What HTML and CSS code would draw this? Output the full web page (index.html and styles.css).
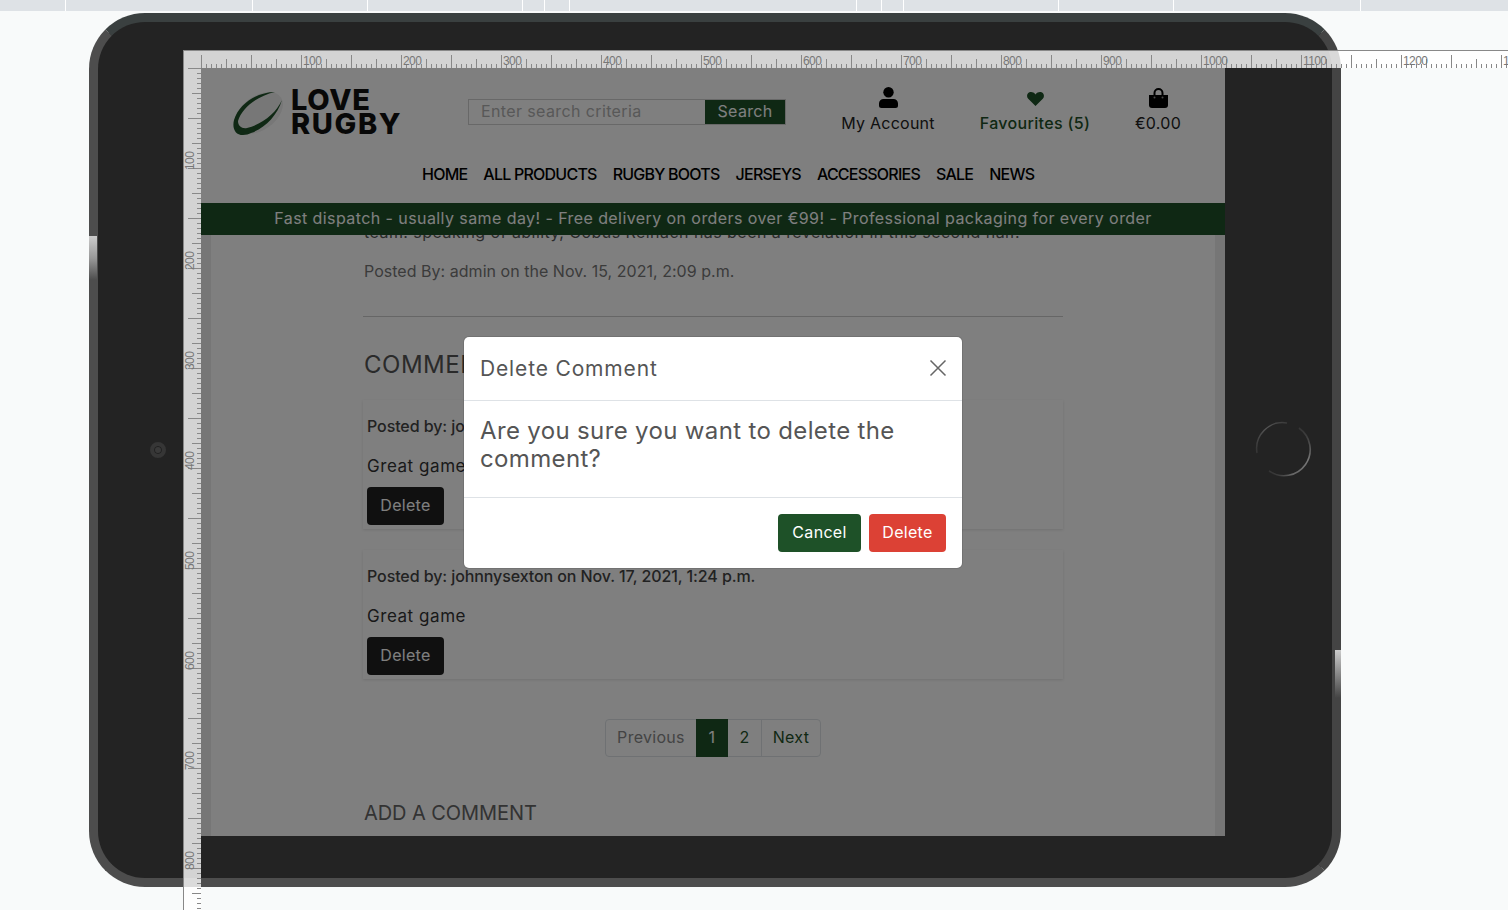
FILE: index.html
```html
<!DOCTYPE html>
<html lang="en">
<head>
    <meta charset="UTF-8">
    <title>Love Rugby - Responsive view</title>
    <link rel="stylesheet" href="styles.css">
</head>
<body>
    <div class="topbar">
        <span style="width:66px"></span><span style="width:187px"></span><span style="width:115px"></span>
        <span style="width:155px"></span><span style="width:22px"></span><span style="width:25px"></span>
        <span style="width:287px"></span><span style="width:25px"></span><span style="width:22px"></span>
        <span style="width:155px"></span><span style="width:115px"></span><span style="width:187px"></span>
    </div>

    <div class="tablet">
        <span class="side-btn side-left"></span>
        <span class="side-btn side-right"></span>
        <span class="camera"></span>
        <svg class="home-btn" width="60" height="60" viewBox="0 0 60 60">
            <defs>
                <linearGradient id="ringA" gradientUnits="userSpaceOnUse" x1="4" y1="36" x2="34" y2="4">
                    <stop offset="0" stop-color="#333"/>
                    <stop offset="0.6" stop-color="#555"/>
                    <stop offset="1" stop-color="#3a3a3a"/>
                </linearGradient>
                <linearGradient id="ringB" gradientUnits="userSpaceOnUse" x1="46" y1="8" x2="16" y2="54">
                    <stop offset="0" stop-color="#333"/>
                    <stop offset="0.4" stop-color="#777"/>
                    <stop offset="0.8" stop-color="#666"/>
                    <stop offset="1" stop-color="#2c2c2c"/>
                </linearGradient>
            </defs>
            <path d="M4 34A26 26 0 0 1 34 4" fill="none" stroke="url(#ringA)" stroke-width="1.5"/>
            <path d="M46 9A26 26 0 0 1 16 52" fill="none" stroke="url(#ringB)" stroke-width="1.6"/>
        </svg>

        <div class="screen">
            <header class="site-header">
                <div class="header-top">
                    <a class="logo">
                        <svg width="50" height="46" viewBox="0 0 50 46">
                            <ellipse cx="26" cy="23" rx="27" ry="17" transform="rotate(-36 26 23)" fill="#efefef"/>
                            <path d="M42 2C24 2 6 14 1 30C-1 38 2 45 10 45C13 45 16 44 18 43C32 38 44 26 49 10C43 23 30 34 14 38C9 39 5 36 5 31C9 18 24 6 42 2Z" fill="#1e5128"/>
                        </svg>
                        <span class="logo-text">LOVE<br><span class="logo-rugby">RUGBY</span></span>
                    </a>
                    <form class="search">
                        <span class="search-input">Enter search criteria</span>
                        <button type="button" class="search-btn">Search</button>
                    </form>
                    <a class="head-link account">
                        <svg width="19" height="21" viewBox="0 0 19 21">
                            <circle cx="9.5" cy="5.2" r="5.2"/>
                            <path d="M0 18.5V16.5A4.5 4.5 0 0 1 4.5 12H14.5A4.5 4.5 0 0 1 19 16.5V18.5A2.5 2.5 0 0 1 16.5 21H2.5A2.5 2.5 0 0 1 0 18.5Z"/>
                        </svg>
                        <span>My Account</span>
                    </a>
                    <a class="head-link favs">
                        <svg width="17" height="14" viewBox="0 0 17 14">
                            <path d="M8.5 14L1.2 6.8C-.6 4.8-.2 1.7 2 .5C4 -.4 6.6 0 8.5 2.4C10.4 0 13 -.4 15 .5C17.2 1.7 17.6 4.8 15.8 6.8Z" fill="#1e5128"/>
                        </svg>
                        <span>Favourites (5)</span>
                    </a>
                    <a class="head-link bag">
                        <svg width="19" height="20" viewBox="0 0 19 20">
                            <path d="M5.5 8V5A4 4 0 0 1 13.5 5V8" fill="none" stroke="#000" stroke-width="2"/>
                            <path d="M0 7H19V17A3 3 0 0 1 16 20H3A3 3 0 0 1 0 17Z"/>
                            <circle cx="5.5" cy="9.5" r="1" fill="#999"/>
                            <circle cx="13.5" cy="9.5" r="1" fill="#999"/>
                        </svg>
                        <span>€0.00</span>
                    </a>
                </div>
                <nav class="main-nav">
                    <a>HOME</a>
                    <a>ALL PRODUCTS</a>
                    <a>RUGBY BOOTS</a>
                    <a>JERSEYS</a>
                    <a>ACCESSORIES</a>
                    <a>SALE</a>
                    <a>NEWS</a>
                </nav>
            </header>
            <div class="banner">Fast dispatch - usually same day! - Free delivery on orders over €99! - Professional packaging for every order</div>

            <main class="page">
                <div class="page-inner">
                    <article class="post">
                        <p class="post-text">team. speaking of ability, Cobus Reinach has been a revelation in this second half.</p>
                        <p class="post-meta">Posted By: admin on the Nov. 15, 2021, 2:09 p.m.</p>
                        <hr>
                        <h2 class="comments-title">COMMENTS</h2>

                        <div class="comment">
                            <p class="comment-by">Posted by: johnnysexton on Nov. 17, 2021, 1:24 p.m.</p>
                            <p class="comment-body">Great game</p>
                            <button type="button" class="btn-dark">Delete</button>
                        </div>
                        <div class="comment">
                            <p class="comment-by">Posted by: johnnysexton on Nov. 17, 2021, 1:24 p.m.</p>
                            <p class="comment-body">Great game</p>
                            <button type="button" class="btn-dark">Delete</button>
                        </div>

                        <div class="pager">
                            <a class="pager-prev">Previous</a>
                            <a class="pager-one">1</a>
                            <a class="pager-two">2</a>
                            <a class="pager-next">Next</a>
                        </div>

                        <h3 class="add-title">ADD A COMMENT</h3>
                    </article>
                </div>
            </main>

            <div class="scrim"></div>

            <div class="modal">
                <div class="modal-head">
                    <h5>Delete Comment</h5>
                    <svg class="modal-close" width="18" height="18" viewBox="0 0 18 18">
                        <path d="M1.5 1.5L16.5 16.5M16.5 1.5L1.5 16.5" stroke="#666" stroke-width="1.5"/>
                    </svg>
                </div>
                <div class="modal-body">Are you sure you want to delete the comment?</div>
                <div class="modal-foot">
                    <button type="button" class="btn-cancel">Cancel</button>
                    <button type="button" class="btn-delete">Delete</button>
                </div>
            </div>
        </div>
    </div>

    <div class="ruler ruler-h">
        <div class="scale-h">
            <span>100</span><span>200</span><span>300</span><span>400</span><span>500</span><span>600</span><span>700</span>
            <span>800</span><span>900</span><span>1000</span><span>1100</span><span>1200</span><span>1300</span>
        </div>
    </div>
    <div class="ruler ruler-v">
        <div class="scale-v">
            <span>100</span><span>200</span><span>300</span><span>400</span><span>500</span><span>600</span><span>700</span><span>800</span>
        </div>
    </div>
</body>
</html>
```

FILE: styles.css
```css
* { box-sizing: border-box; }
html, body { margin: 0; height: 910px; overflow: hidden; }
body { position: relative; background: #f8fafa; font-family: "Inter", "Open Sans", sans-serif; font-size: 16px; color: #333; }
p, h2, h3, h5 { margin: 0; font-weight: 400; }
button { font: inherit; border: none; cursor: pointer; }

.topbar { display: flex; height: 11px; background: #dee2e6; }
.topbar span { border-right: 1px solid #fff; }

/* device frame */
.tablet { position: relative; width: 1252px; height: 874px; margin: 2px 0 0 89px; padding: 46px 0 0 103px; background: #232323; border: 9px solid #4d4d4d; border-top-color: #3a4040; border-right-color: #444; border-radius: 56px; }
.side-btn { position: absolute; width: 8px; }
.side-left { left: -9px; top: 214px; height: 44px; background: linear-gradient(#ccc, #999 50%, #4d4d4d); }
.side-right { right: -9px; top: 628px; height: 48px; width: 6px; background: linear-gradient(#ccc, #888 50%, #444); }
.camera { position: absolute; left: 52px; top: 420px; width: 16px; height: 16px; border-radius: 50%; background: #3a3a3a; border: 4px solid #363636; box-shadow: inset 0 0 0 1px #222; }
.home-btn { position: absolute; left: 1155px; top: 397px; }

.screen { position: relative; display: flex; flex-direction: column; width: 1024px; height: 768px; overflow: hidden; background: #fff; }
.scrim { position: absolute; inset: 0; background: rgba(0,0,0,0.5); }

/* site header */
.site-header { height: 135px; background: #fff; }
.header-top { display: flex; align-items: flex-start; height: 78px; padding-left: 32px; }
.logo { display: flex; width: 235px; padding-top: 22px; }
.logo-text { margin: -2px 0 0 8px; font-weight: 800; font-size: 29px; line-height: 24px; color: #111; letter-spacing: 0.7px; }
.logo-rugby { letter-spacing: 1.6px; }
.search { display: flex; width: 318px; height: 26px; margin-top: 31px; border: 1px solid #d0d0d0; }
.search-input { width: 236px; padding-left: 12px; line-height: 23px; color: #b0b0b0; letter-spacing: 0.38px; }
.search-btn { width: 80px; height: 24px; padding: 0 0 2px; background: #1e5128; color: #fff; letter-spacing: 0.3px; }
.head-link { display: flex; flex-direction: column; align-items: center; height: 67px; color: #222; }
.head-link span { margin-top: auto; line-height: 24px; }
.head-link svg { display: block; }
.account { width: 136px; margin-left: 34px; padding-top: 19px; letter-spacing: 0.25px; }
.favs { width: 158px; padding-top: 24px; color: #1e5128; font-weight: 500; letter-spacing: 0.33px; }
.bag { width: 88px; padding-top: 20px; letter-spacing: 0.3px; }
.main-nav { display: flex; gap: 16px; margin-left: 221px; padding-top: 16px; line-height: 24px; font-weight: 500; color: #000; letter-spacing: -0.77px; }

.banner { height: 32px; background: #1e5128; color: #fff; text-align: center; line-height: 31px; letter-spacing: 0.42px; }

/* page body */
.page { flex: 1; overflow: hidden; padding: 0 10px; background: #ececec; }
.page-inner { display: flow-root; height: 100%; background: #fff; }
.post { width: 700px; margin: 0 auto; }
.post-text { margin: -15px 0 0 1px; line-height: 24px; color: #555; letter-spacing: 0.45px; white-space: nowrap; }
.post-meta { margin: 15px 0 0 1px; line-height: 24px; color: #777; letter-spacing: 0.03px; }
hr { height: 1px; margin: 33px 0 0; border: none; background: #ccc; }
.comments-title { margin: 33px 0 0 1px; font-size: 24px; line-height: 29px; color: #555; letter-spacing: 0.5px; }

.comment { height: 129px; margin-top: 21px; padding: 14px 4px 4px; background: #fff; box-shadow: 0 1px 3px rgba(0,0,0,0.12); }
.comment-by { line-height: 24px; font-weight: 500; color: #444; letter-spacing: -0.09px; white-space: nowrap; }
.comment-body { margin-top: 16px; font-size: 17px; line-height: 24px; letter-spacing: 0.55px; }
.btn-dark { display: block; width: 77px; height: 38px; margin-top: 9px; padding: 0 0 2px; background: #212121; color: #fff; border-radius: 4px; letter-spacing: 0.3px; }

.pager { display: flex; width: 216px; height: 38px; margin: 40px auto 0; line-height: 35px; text-align: center; border: 1px solid #dee2e6; border-radius: 4px; color: #1e5128; letter-spacing: 0.3px; }
.pager-prev { width: 90px; color: #888; }
.pager-one { width: 32px; margin: -1px 0; background: #1e5128; color: #fff; line-height: 37px; }
.pager-two { width: 34px; border-right: 1px solid #dee2e6; }
.pager-next { flex: 1; }
.add-title { margin: 44px 0 0 1px; font-size: 20px; line-height: 24px; color: #666; letter-spacing: -0.08px; }

/* modal */
.modal { position: absolute; left: 263px; top: 269px; width: 498px; height: 231px; background: #fff; border-radius: 5px; box-shadow: 0 0 0 1px rgba(0,0,0,0.1); color: #555; }
.modal-head { display: flex; align-items: center; justify-content: space-between; height: 64px; padding: 0 15px 0 16px; border-bottom: 1px solid #dee2e6; }
.modal-head h5 { font-size: 21px; letter-spacing: 0.85px; }
.modal-close { margin-top: -2px; }
.modal-body { height: 97px; padding: 16px 16px 0; font-size: 24px; line-height: 28px; letter-spacing: 0.35px; border-bottom: 1px solid #dee2e6; }
.modal-foot { display: flex; justify-content: flex-end; gap: 8px; padding: 16px 16px 0; }
.btn-cancel, .btn-delete { height: 38px; padding: 0 0 2px; color: #fff; border-radius: 4px; letter-spacing: 0.3px; }
.btn-cancel { width: 83px; background: #1e5128; }
.btn-delete { width: 77px; background: #dc4135; }

/* rulers drawn over the device */
.ruler { position: absolute; top: 50px; overflow: hidden; background-color: rgba(255,255,255,0.8); font-family: "Liberation Sans", sans-serif; font-size: 12px; color: #777; border-top: 1px solid #888; }
.ruler-h { left: 201px; right: 0; height: 18px; }
.ruler-v { left: 183px; width: 18px; height: 860px; padding-top: 17px; border-left: 1px solid #888; }
.scale-h, .scale-v { display: flex; height: 100%; width: 100%; }
.scale-h { padding-left: 100px; background-image: linear-gradient(to right, #888 1px, transparent 1px), linear-gradient(to right, #888 1px, transparent 1px), linear-gradient(to right, #888 1px, transparent 1px); background-repeat: repeat-x; background-size: 50px 13px, 25px 9px, 5px 4px; background-position: 0 100%, 0 100%, 0 100%; }
.scale-h span { flex: 0 0 100px; padding: 4px 0 0 2px; line-height: 12px; letter-spacing: -0.6px; }
.scale-v { flex-direction: column; background-image: linear-gradient(#888 1px, transparent 1px), linear-gradient(#888 1px, transparent 1px), linear-gradient(#888 1px, transparent 1px); background-repeat: repeat-y; background-size: 13px 50px, 9px 25px, 4px 5px; background-position: 100% 0, 100% 0, 100% 0; }
.scale-v span { flex: 0 0 100px; padding-left: 2px; writing-mode: vertical-rl; transform: rotate(180deg) translateY(-2px); letter-spacing: -0.6px; line-height: 12px; }
```
